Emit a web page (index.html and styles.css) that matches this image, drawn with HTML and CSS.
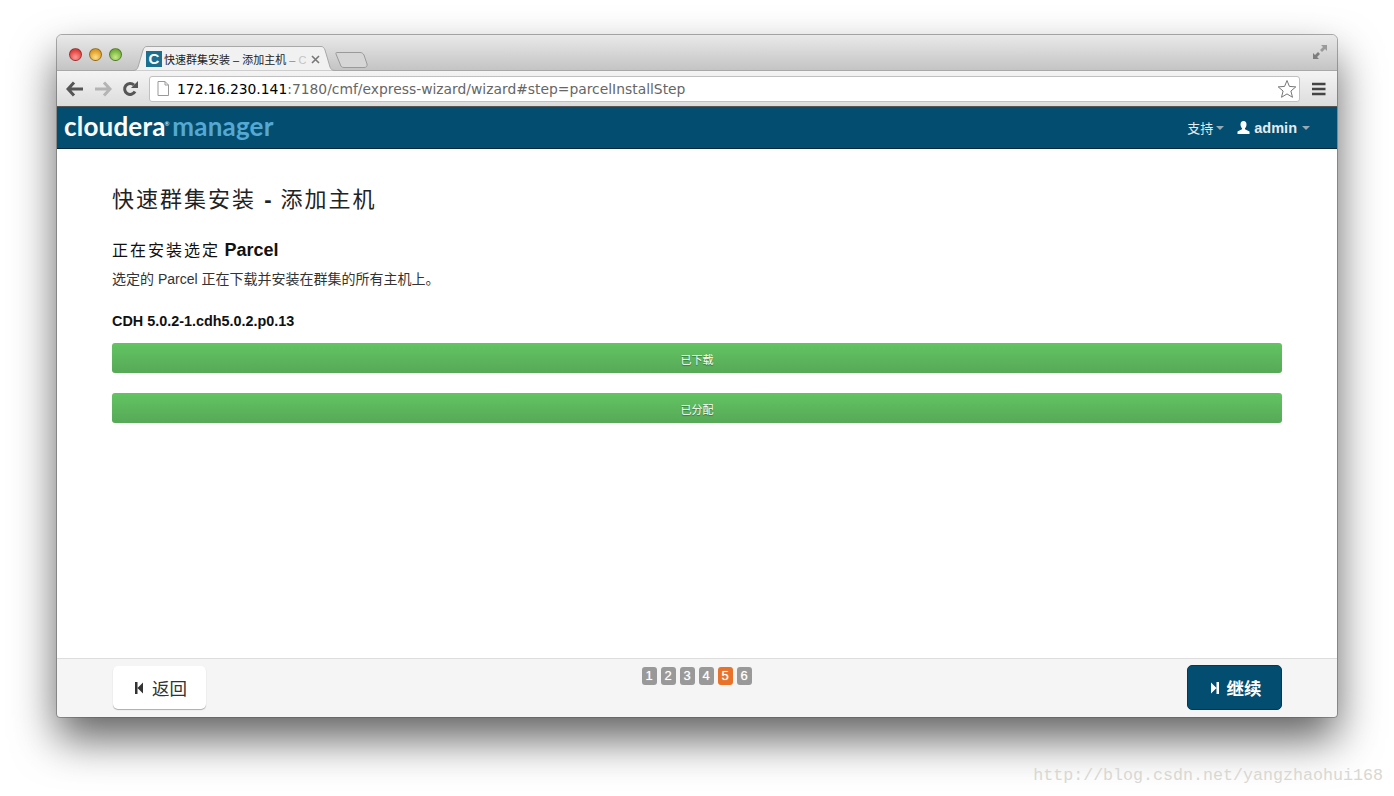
FILE: index.html
```html
<!DOCTYPE html>
<html lang="zh-CN">
<head>
<meta charset="utf-8">
<title>快速群集安装 - 添加主机</title>
<link rel="stylesheet" href="styles.css">
</head>
<body>
<div class="window">
  <header class="titlebar">
    <div class="lights">
      <span class="light light-red"></span>
      <span class="light light-yellow"></span>
      <span class="light light-green"></span>
    </div>
    <div class="tab">
      <svg class="tab-shape" width="202" height="25" viewBox="0 0 202 25">
        <path d="M0 24.500C3 24.500 4 23.500 5 21L10 4C11 1.500 12 .5 14 .5H188C190 .5 191 1.500 192 4L197 21C198 23.500 199 24.500 202 24.500" fill="#f1f1f1" stroke="#a8a8a8"/>
      </svg>
      <span class="favicon">C</span>
      <span class="tab-title">快速群集安装 – 添加主机 <span class="fade-a">–</span> <span class="fade-b">C</span></span>
      <svg class="tab-close" width="9" height="9" viewBox="0 0 9 9"><path d="M1 1L8 8M8 1L1 8" stroke="#777" stroke-width="1.600"/></svg>
    </div>
    <svg class="newtab" width="33" height="18" viewBox="0 0 33 18">
      <path d="M1.500 1.500H25C27 1.500 28 2.500 29 4L32 13C32.500 15 31.500 16.500 29 16.500H9C7 16.500 6 15.500 5.500 14L1 3C.7 2 1 1.500 1.500 1.500Z" fill="#d6d6d6" stroke="#9a9a9a"/>
    </svg>
    <svg class="fullscreen" width="16" height="16" viewBox="0 0 16 16">
      <path d="M9 1H15V7L13 5L10 8L8 6L11 3Z" fill="#9a9a9a"/>
      <path d="M7 15H1V9L3 11L6 8L8 10L5 13Z" fill="#7d7d7d"/>
    </svg>
  </header>

  <div class="toolbar">
    <svg class="tool" width="18" height="16" viewBox="0 0 18 16"><path d="M8 1.500L2 8L8 14.500M2.500 8H17" fill="none" stroke="#555" stroke-width="3"/></svg>
    <svg class="tool" width="18" height="16" viewBox="0 0 18 16"><path d="M10 1.500L16 8L10 14.500M15.500 8H1" fill="none" stroke="#b4b4b4" stroke-width="3"/></svg>
    <svg class="tool" width="16" height="16" viewBox="0 0 16 16"><path d="M13 10.500A5.500 5.500 0 1 1 12 4" fill="none" stroke="#555" stroke-width="3"/><path d="M9 7H16V0Z" fill="#555"/></svg>
    <div class="omnibox">
      <svg class="page-icon" width="12" height="15" viewBox="0 0 12 15"><path d="M1 .5H8L11.500 4V14.500H1ZM8 .5V4H11.500" fill="#fff" stroke="#9a9a9a"/></svg>
      <span class="url"><span class="host">172.16.230.141</span>:7180/cmf/express-wizard/wizard#step=parcelInstallStep</span>
      <svg class="star" width="20" height="20" viewBox="0 0 20 20"><path d="M10 1.500L12.400 7.400L18.800 7.900L13.900 12L15.500 18.300L10 14.900L4.500 18.300L6.100 12L1.200 7.900L7.600 7.400Z" fill="#fff" stroke="#777"/></svg>
    </div>
    <svg class="menu-icon" width="14" height="14" viewBox="0 0 14 14"><path d="M0 2H13.500M0 7H13.500M0 12H13.500" stroke="#444" stroke-width="2.600"/></svg>
  </div>

  <nav class="navbar">
    <div class="logo"><span class="logo-a">cloudera</span><span class="logo-reg">®</span> <span class="logo-b">manager</span></div>
    <div class="nav-right">
      <span class="nav-item">支持<i class="caret"></i></span>
      <span class="nav-item nav-user">
        <svg width="13" height="13" viewBox="0 0 13 13"><path d="M6.500 0C8.500 0 9.500 1.500 9.500 3.500C9.500 5 9 6.300 8 7.300V8.200L12.500 10.500V13H.5V10.500L5 8.200V7.300C4 6.300 3.500 5 3.500 3.500C3.500 1.500 4.500 0 6.500 0Z" fill="#fff"/></svg>
        <b>admin</b><i class="caret caret-wide"></i>
      </span>
    </div>
  </nav>

  <main class="content">
    <h1>快速群集安装 <b>-</b> 添加主机</h1>
    <h2>正在安装选定 <b>Parcel</b></h2>
    <p class="desc">选定的 Parcel 正在下载并安装在群集的所有主机上。</p>
    <p class="parcel">CDH 5.0.2-1.cdh5.0.2.p0.13</p>
    <div class="bar">已下载</div>
    <div class="bar">已分配</div>
  </main>

  <footer class="footer">
    <button class="btn btn-back">
      <svg width="8" height="12" viewBox="0 0 8 12"><path d="M0 0H2.500V12H0ZM2.500 6L8 .5V11.500Z" fill="#333"/></svg>
      返回
    </button>
    <div class="steps">
      <span class="step">1</span><span class="step">2</span><span class="step">3</span><span class="step">4</span><span class="step step-on">5</span><span class="step">6</span>
    </div>
    <button class="btn btn-next">
      <svg width="8" height="12" viewBox="0 0 8 12"><path d="M0 .5L5.500 6L0 11.500ZM5.500 0H8V12H5.500Z" fill="#fff"/></svg>
      继续
    </button>
  </footer>
</div>
<div class="watermark">http://blog.csdn.net/yangzhaohui168</div>
</body>
</html>
```

FILE: styles.css
```css
* { box-sizing: border-box; }
html, body { height: 100%; }
body {
  margin: 0;
  padding: 35px 57px 0;
  background: #fff;
  overflow: hidden;
  position: relative;
  font-family: "Liberation Sans", "Noto Sans CJK SC", sans-serif;
  color: #222;
}
.window {
  height: 682px;
  display: flex;
  flex-direction: column;
  border-radius: 5px 5px 3px 3px;
  background: #fff;
  box-shadow: 0 22px 44px rgba(0,0,0,.62), 0 0 1px rgba(0,0,0,.5);
  outline: 1px solid rgba(90,90,90,.45);
}
.titlebar {
  flex: 0 0 36px;
  display: flex;
  align-items: flex-end;
  position: relative;
  border-radius: 5px 5px 0 0;
  background: linear-gradient(#e9e9e9, #c4c4c4);
  border-bottom: 1px solid #a8a8a8;
}
.lights {
  display: flex;
  gap: 7px;
  position: absolute;
  left: 12px;
  top: 13px;
}
.light {
  width: 13px;
  height: 13px;
  border-radius: 50%;
  border: 1px solid rgba(0,0,0,.35);
}
.light-red { background: radial-gradient(circle at 50% 75%, #ff9a96, #e0403c 70%); }
.light-yellow { background: radial-gradient(circle at 50% 75%, #ffe08a, #dc9a22 70%); }
.light-green { background: radial-gradient(circle at 50% 75%, #c8ec88, #74b03a 70%); }
.tab {
  position: relative;
  width: 202px;
  height: 25px;
  margin-left: 76px;
  margin-bottom: -1px;
  display: flex;
  align-items: center;
  padding: 1px 0 0 13px;
  font-size: 11px;
  color: #222;
}
.tab-shape { position: absolute; left: 0; top: 0; }
.favicon {
  position: relative;
  flex: none;
  width: 16px;
  height: 16px;
  background: #1b6f8f;
  color: #fff;
  font-weight: bold;
  font-size: 15px;
  line-height: 16px;
  text-align: center;
  margin-right: 2px;
}
.tab-title {
  position: relative;
  width: 144px;
  white-space: nowrap;
}
.fade-a { color: #888; }
.fade-b { color: #c4c4c4; }
.tab-close { position: relative; margin-left: 3px; }
.newtab { margin: 0 0 1px 0; }
.fullscreen { position: absolute; right: 9px; top: 9px; }
.toolbar {
  flex: 0 0 36px;
  display: flex;
  align-items: center;
  padding: 0 11px 0 9px;
  background: linear-gradient(#f4f4f4, #dcdcdc);
  border-bottom: 1px solid #555;
}
.tool { margin-right: 10px; flex: none; }
.tool:nth-child(3) { margin-right: 11px; }
.omnibox {
  width: 1151px;
  height: 26px;
  display: flex;
  align-items: center;
  padding: 0 2px 0 7px;
  background: #fff;
  border: 1px solid #c0c0c0;
  border-radius: 3px;
  margin-right: 12px;
  flex: none;
}
.page-icon { flex: none; margin-right: 8px; }
.url {
  flex: 1;
  font-family: "DejaVu Sans", sans-serif;
  font-size: 13.860px;
  color: #666;
  white-space: nowrap;
}
.host { color: #000; }
.navbar {
  flex: 0 0 42px;
  display: flex;
  align-items: center;
  justify-content: space-between;
  padding: 0 27px 0 7px;
  background: #034e70;
  border-bottom: 1px solid #02283a;
}
.logo {
  font-family: "Lato", sans-serif;
  font-size: 26px;
  line-height: 30px;
  font-weight: 700;
  letter-spacing: .2px;
  white-space: nowrap;
  margin-bottom: 5px;
}
.logo-a { color: #fff; }
.logo-b { color: #55a8d2; }
.logo-reg { color: #fff; font-size: 6px; vertical-align: 10px; font-weight: 400; margin: 0 -4px 0 -1px; }
.nav-right {
  display: flex;
  align-items: center;
  gap: 13px;
  color: #e4ebef;
  font-size: 13px;
}
.nav-item { display: flex; align-items: center; }
.nav-user svg { margin-right: 4px; }
.nav-user b { font-size: 14.500px; }
.caret {
  display: block;
  width: 0;
  height: 0;
  margin-left: 3px;
  border-left: 4px solid transparent;
  border-right: 4px solid transparent;
  border-top: 4px solid #96a9b4;
}
.caret-wide { margin-left: 5px; }
.content {
  flex: 1;
  padding: 36px 55px 0;
}
h1 {
  margin: 0;
  font-size: 22px;
  line-height: 30px;
  font-weight: 400;
  letter-spacing: 2px;
  color: #222;
}
h1 b { letter-spacing: 1px; }
h2 {
  margin: 24px 0 0;
  font-size: 16px;
  line-height: 22px;
  font-weight: 400;
  letter-spacing: 2px;
  color: #111;
}
h2 b { font-size: 18px; letter-spacing: 0; margin-left: -2px; }
.desc {
  margin: 8px 0 0;
  font-size: 14px;
  line-height: 18px;
  color: #333;
}
.parcel {
  margin: 24px 0 0;
  font-size: 14.400px;
  line-height: 18px;
  font-weight: bold;
  color: #111;
}
.bar {
  height: 30px;
  margin-top: 20px;
  border-radius: 3px;
  background: linear-gradient(#62c462, #57a957);
  color: #fff;
  font-size: 11px;
  line-height: 34px;
  text-align: center;
  text-shadow: 0 1px 1px rgba(0,0,0,.4);
}
.parcel + .bar { margin-top: 13px; }
.footer {
  flex: 0 0 59px;
  display: flex;
  justify-content: space-between;
  align-items: flex-start;
  padding: 7px 55px 0 56px;
  background: #f5f5f5;
  border-top: 1px solid #ddd;
  border-radius: 0 0 3px 3px;
}
.btn {
  display: flex;
  align-items: center;
  justify-content: center;
  border-radius: 5px;
  padding: 0 0 0 3px;
  font-family: inherit;
  font-size: 17.500px;
}
.btn-back {
  gap: 9px;
  width: 93px;
  height: 43px;
  background: #fff;
  color: #333;
  border: 0;
  box-shadow: 0 1px 1px rgba(0,0,0,.3);
}
.btn-next {
  gap: 8px;
  width: 95px;
  height: 45px;
  margin-top: -1px;
  background: #034e70;
  color: #fff;
  border: 1px solid #023a54;
  font-weight: bold;
}
.steps {
  display: flex;
  gap: 4px;
  margin-top: 1px;
}
.step {
  width: 15px;
  height: 18px;
  border-radius: 3px;
  background: #999;
  color: #fff;
  font-size: 13px;
  line-height: 18px;
  text-align: center;
  text-shadow: 0 0 1px rgba(255,255,255,.7);
}
.step-on { background: #e8722a; }
.watermark {
  position: absolute;
  right: 11px;
  top: 766px;
  font-family: "Liberation Mono", monospace;
  font-size: 16.670px;
  color: #d8d8d2;
  white-space: nowrap;
}
```
